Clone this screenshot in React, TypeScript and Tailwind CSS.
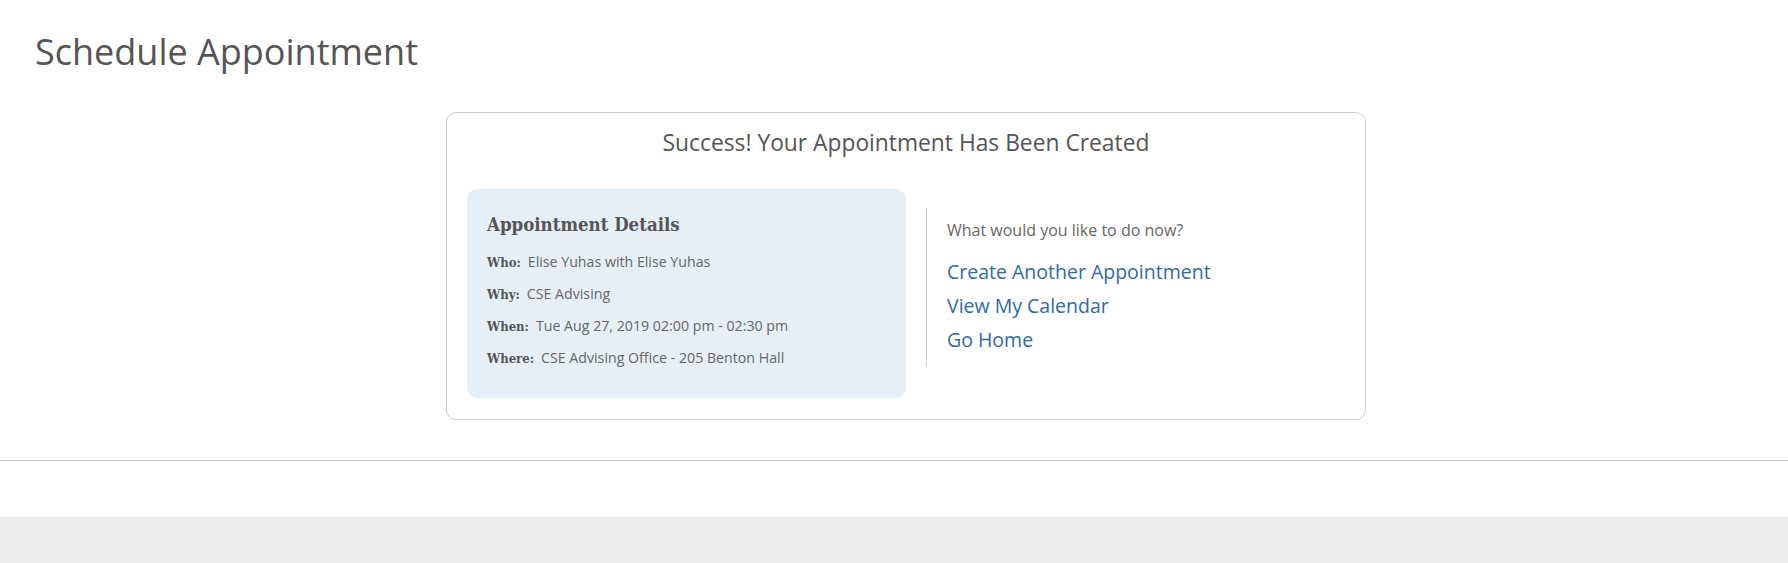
import React from "react";

type Detail = { label: string; value: string };

const details: Detail[] = [
  { label: "Who:", value: "Elise Yuhas with Elise Yuhas" },
  { label: "Why:", value: "CSE Advising" },
  { label: "When:", value: "Tue Aug 27, 2019 02:00 pm - 02:30 pm" },
  { label: "Where:", value: "CSE Advising Office - 205 Benton Hall" },
];

const actions = ["Create Another Appointment", "View My Calendar", "Go Home"];

export default function App() {
  return (
    <div className="min-h-screen bg-[#ededed] font-['Open_Sans',sans-serif]">
      <div className="bg-white">
        <h1 className="pt-[32px] pl-[35px] text-[36px] leading-[1.1] font-normal text-[#555]">
          Schedule Appointment
        </h1>

        <div className="ml-[446px] mt-[40px] w-[920px] rounded-[10px] border border-[#cfcfcf] px-[20px] pt-[17px] pb-[21px]">
          <h2 className="text-center text-[22.8px] leading-[1.1] text-[#555]">
            Success! Your Appointment Has Been Created
          </h2>

          <div className="mt-[34px] flex">
            <section className="w-[439px] rounded-[10px] bg-[#e6eef6] px-[20px] pt-[24px] pb-[24px]">
              <h3 className="h-[24px] font-['DejaVu_Serif_Condensed','DejaVu_Serif',serif] text-[18.5px] leading-[24px] font-bold text-[#555]">
                Appointment Details
              </h3>
              <div className="mt-[9px]">
                {details.map((d) => (
                  <div key={d.label} className="flex h-[32px] items-baseline leading-[32px]">
                    <span className="mr-[7px] font-['DejaVu_Serif_Condensed','DejaVu_Serif',serif] text-[13px] font-bold text-[#555]">
                      {d.label}
                    </span>
                    <span className="text-[14.2px] text-[#666]">{d.value}</span>
                  </div>
                ))}
              </div>
            </section>

            <div className="mt-[19px] ml-[20px] h-[159px] flex-1 border-l border-[#d4d4d4] pl-[20px] pt-[11px]">
              <p className="text-[16px] leading-[22px] text-[#666]">What would you like to do now?</p>
              <ul className="mt-[14px]">
                {actions.map((a) => (
                  <li key={a} className="text-[19.5px] leading-[34px]">
                    <a href="#" className="text-[#2f6aa9]">
                      {a}
                    </a>
                  </li>
                ))}
              </ul>
            </div>
          </div>
        </div>

        <div className="mt-[40px] h-[57px] border-t border-[#cccccc]" />
      </div>
    </div>
  );
}
